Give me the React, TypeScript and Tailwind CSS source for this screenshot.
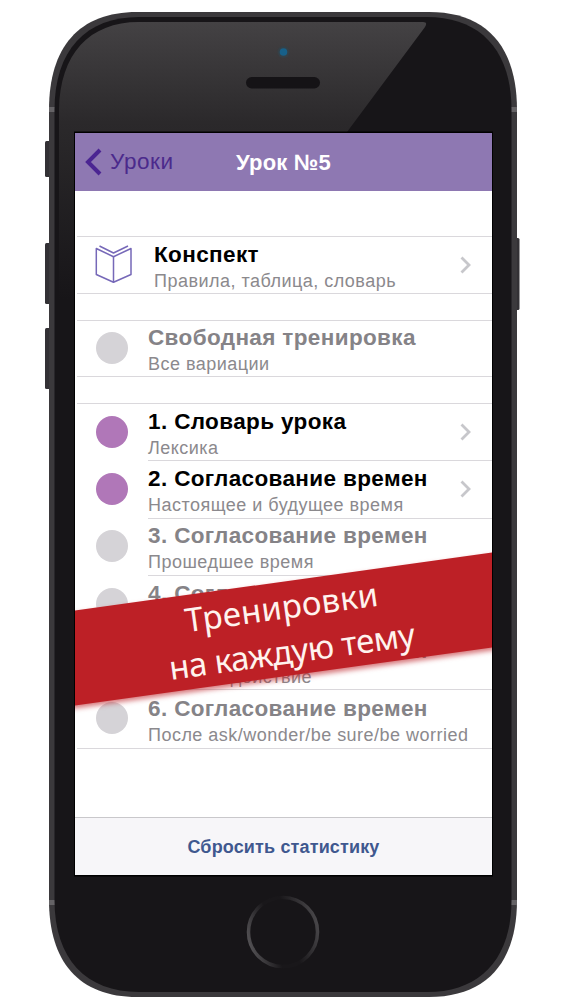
import clsx from "clsx";

type LessonType = {
  title: string;
  subtitle: string;
  active?: boolean;
};

const lessons: LessonType[] = [
  { title: "1. Словарь урока", subtitle: "Лексика", active: true },
  {
    title: "2. Согласование времен",
    subtitle: "Настоящее и будущее время",
    active: true,
  },
  { title: "3. Согласование времен", subtitle: "Прошедшее время" },
  { title: "4. Согласование времен", subtitle: "Вопросы" },
  { title: "5. Согласование времен", subtitle: "Будущее действие" },
  {
    title: "6. Согласование времен",
    subtitle: "После ask/wonder/be sure/be worried",
  },
];

function Chevron() {
  return (
    <svg width="12" height="18" viewBox="0 0 12 18" className="mr-[20px] shrink-0">
      <path d="M1.500 1.500 9 9 1.500 16.500" fill="none" stroke="#c7c7cb" strokeWidth="2.800" />
    </svg>
  );
}

function BookIcon() {
  return (
    <svg
      width="38"
      height="40"
      viewBox="0 0 38 40"
      fill="none"
      stroke="#7668b8"
      strokeWidth="1.500"
      strokeLinejoin="round"
    >
      <path d="M1.300 3.500 18.500 11.700 36 3.500V29.500L18.500 37.300 1.300 29.500Z" />
      <path d="M18.500 11.700V37.300M4.500 1 18.500 8 33 1" />
    </svg>
  );
}

function Dot({ active }: { active?: boolean }) {
  return (
    <span
      className={clsx(
        "mb-[2px] block h-8 w-8 rounded-full",
        active ? "bg-[#b077b8]" : "bg-[#d5d3d7]",
      )}
    />
  );
}

function RowText({ title, subtitle, active }: LessonType) {
  return (
    <div className="min-w-0 flex-1 whitespace-nowrap">
      <div
        className={clsx(
          "pt-[4px] pb-px text-[22.5px] leading-[27px] font-bold tracking-[0.37px]",
          active ? "text-black" : "text-[#858387]",
        )}
      >
        {title}
      </div>
      <div className="text-[18px] leading-[25px] tracking-[0.48px] text-[#8b898d]">
        {subtitle}
      </div>
    </div>
  );
}

function Bezel() {
  return (
    <svg
      width="563"
      height="1000"
      viewBox="0 0 563 1000"
      className="absolute inset-0"
    >
      <defs>
        <linearGradient id="glare" x1="0" y1="0" x2="0" y2="1">
          <stop offset="0" stopColor="#444244" />
          <stop offset="0.36" stopColor="#2b292b" />
          <stop offset="1" stopColor="#171518" />
        </linearGradient>
        <linearGradient id="ring" x1="0" y1="0.65" x2="1" y2="0.35">
          <stop offset="0" stopColor="#525053" />
          <stop offset="0.35" stopColor="#19171a" />
          <stop offset="0.6" stopColor="#19171a" />
          <stop offset="1" stopColor="#484649" />
        </linearGradient>
      </defs>
      <g fill="#333135">
        <rect x="45" y="141" width="8" height="36" rx="1.5" />
        <rect x="45" y="243" width="8" height="61" rx="1.5" />
        <rect x="45" y="328" width="8" height="61" rx="1.5" />
        <rect x="512" y="238" width="7.5" height="72" rx="1.5" />
      </g>
      <path
        d="M49 110C49 47 79 12 137 12H429C487 12 517 47 517 110V900C517 962 487 997 429 997H137C79 997 49 962 49 900Z"
        fill="#3b393c"
      />
      <path d="M49 107h6v5h-6zM511 107h6v5h-6zM49 900h6v5h-6zM511 900h6v5h-6z" fill="#656366" />
      <path
        d="M54.500 110C54.500 50 86 17 139 17H427C480 17 511.500 50 511.500 110V900C511.500 959 480 992 427 992H139C86 992 54.500 959 54.500 900Z"
        fill="#171518"
      />
      <path
        d="M59 300V110C60 54 89 22 139 22H423Q428 22 425 27L347 132H75V300Z"
        fill="url(#glare)"
      />
      <circle cx="283.500" cy="52" r="6" fill="#354047" />
      <circle cx="283.500" cy="52" r="3.800" fill="#176089" />
      <rect x="246" y="77" width="74" height="11.500" rx="5.700" fill="#151316" />
      <circle cx="283" cy="932" r="34.500" fill="none" stroke="url(#ring)" strokeWidth="3.500" />
      <rect x="74" y="131.500" width="419" height="745" fill="#000" />
    </svg>
  );
}

function Banner() {
  return (
    <div className="absolute top-[449px] -left-[20px] flex h-[94px] w-[457px] rotate-[-7.92deg] flex-col items-center bg-[#bd2026] pt-[2px] font-['Noto_Sans',sans-serif] text-[33px] leading-[45px] whitespace-nowrap text-[#fff3ee] shadow-[0_3px_5px_rgba(189,32,38,0.6)]">
      <div className="pl-[2px] tracking-[0.2px]">Тренировки</div>
      <div className="pl-[10px] tracking-[-0.45px]">на каждую тему</div>
    </div>
  );
}

function App() {
  return (
    <div className="relative h-[1000px] w-[563px] overflow-hidden bg-white pt-[133px] pl-[75px] font-['Liberation_Sans',Arial,sans-serif]">
      <Bezel />

      <div className="relative flex h-[742px] w-[417px] flex-col overflow-hidden bg-white">
        <header className="grid h-[58px] shrink-0 grid-cols-[1fr_auto_1fr] items-center bg-[#8e78b2]">
          <div className="flex items-center gap-[8px] pl-[10px] text-[22.5px] text-[#4b2a8c]">
            <svg width="17" height="28" viewBox="0 0 17 28">
              <path d="M15 2 3 14 15 26" fill="none" stroke="#4b2592" strokeWidth="4" />
            </svg>
            <span className="tracking-[0.6px]">Уроки</span>
          </div>
          <div className="text-[22px] font-bold tracking-[0.2px] text-white">
            Урок №5
          </div>
        </header>

        <main className="flex flex-col pt-[45px]">
          <section className="ml-[2px] flex h-[58px] items-center border-y border-[#dad8dc]">
            <div className="w-[77px] pl-[18px]">
              <BookIcon />
            </div>
            <RowText
              title="Конспект"
              subtitle="Правила, таблица, словарь"
              active
            />
            <Chevron />
          </section>

          <section className="mt-[26px] ml-[2px] flex h-[57px] items-center border-y border-[#dad8dc]">
            <div className="w-[71px] pl-[19px]">
              <Dot />
            </div>
            <RowText title="Свободная тренировка" subtitle="Все вариации" />
          </section>

          <section className="mt-[26px] ml-[2px] border-y border-[#dad8dc]">
            {lessons.map((lesson, i) => (
              <div key={i} className="flex h-[57.300px]">
                <div className="flex w-[71px] items-center pl-[19px]">
                  <Dot active={lesson.active} />
                </div>
                <div
                  className={clsx(
                    "flex flex-1 items-center",
                    i < lessons.length - 1 && "border-b border-[#dad8dc]",
                  )}
                >
                  <RowText {...lesson} />
                  {lesson.active && <Chevron />}
                </div>
              </div>
            ))}
          </section>
        </main>

        <footer className="mt-auto flex h-[58px] shrink-0 items-center justify-center border-t border-[#c9c8cb] bg-[#f7f6f9] pt-[2px] text-[18px] font-bold tracking-[0.15px] text-[#3f588f]">
          Сбросить статистику
        </footer>

        <Banner />
      </div>
    </div>
  );
}

export default App;
